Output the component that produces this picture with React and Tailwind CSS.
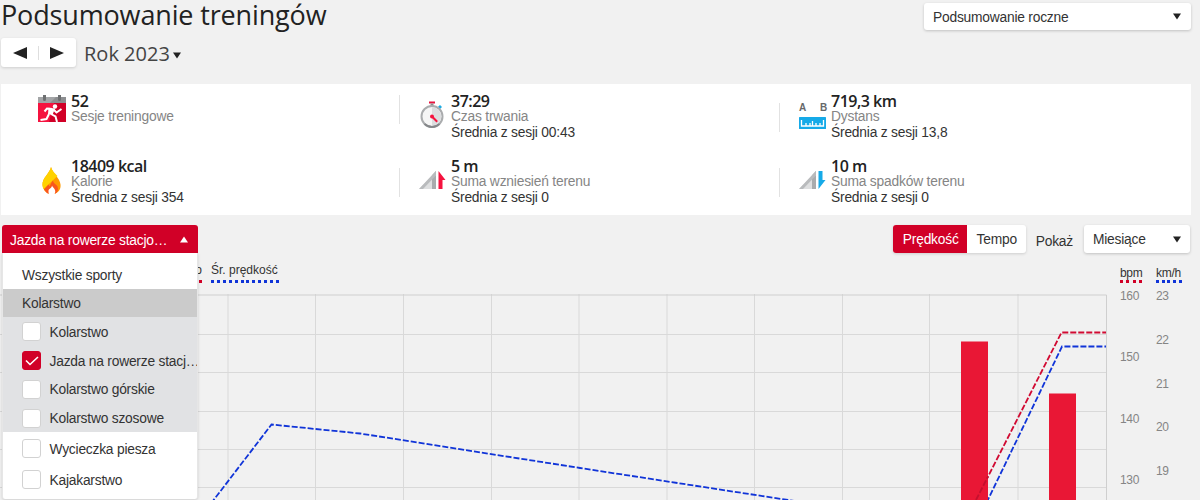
const STATS = [
  { icon: SessionIcon, value: "52", label: "Sesje treningowe" },
  { icon: StopwatchIcon, value: "37:29", label: "Czas trwania", avg: "Średnia z sesji 00:43", rule: "mt-[11px]" },
  { icon: DistanceIcon, value: "719,3 km", label: "Dystans", avg: "Średnia z sesji 13,8", rule: "mt-[19px]" },
  { icon: FlameIcon, value: "18409 kcal", label: "Kalorie", avg: "Średnia z sesji 354" },
  { icon: AscentIcon, value: "5 m", label: "Suma wzniesień terenu", avg: "Średnia z sesji 0", rule: "mt-[19px]" },
  { icon: DescentIcon, value: "10 m", label: "Suma spadków terenu", avg: "Średnia z sesji 0", rule: "mt-[19px]" },
];

const CYCLING = [
  { name: "Kolarstwo" },
  { name: "Jazda na rowerze stacj…", checked: true },
  { name: "Kolarstwo górskie" },
  { name: "Kolarstwo szosowe" },
];

const GRID_X = [228, 315.5, 403.5, 491.5, 579, 667, 754.5, 842.5, 929.5, 1018];
const GRID_Y = [40, 78, 117, 155, 193];

function SessionIcon() {
  return (
    <svg width="28" height="28" viewBox="0 0 28 28" className="mt-[11px] ml-[37px]">
      <rect y="2" width="28" height="7" fill="#a3a5a7" />
      <path d="M18 2h10v7H11z" fill="#8c8e90" />
      <rect y="8" width="28" height="19" fill="#f5133f" />
      <path d="M16 8h12v19H11z" fill="#d10027" />
      <path d="M5 0h3v4.500a1.500 1.500 0 0 1-3 0zM20 0h3v4.500a1.500 1.500 0 0 1-3 0z" fill="#6d6f71" />
      <circle cx="17" cy="11.500" r="2.200" fill="#fff" />
      <path
        d="M6.500 16.500l2.500-3 5 .5M15.500 14.500l3 3 5-3.500M11 19l-2.500 5-6 1M13 19l4.500 2.500 1.500 5.500"
        fill="none"
        stroke="#fff"
        strokeWidth="2"
      />
      <path d="M10.500 12.800l6.500.7-2.500 6.500-4.500-1z" fill="#fff" />
    </svg>
  );
}

function StopwatchIcon() {
  return (
    <svg width="24" height="28" viewBox="0 0 24 28" className="mt-[17px] ml-[20px]">
      <rect x="9" y="0.500" width="6" height="2" fill="#e8123d" />
      <rect x="10.500" y="2.500" width="3" height="2.500" fill="#8d8f91" />
      <path d="M18 5.700l2-1.700 2 2-2 2z" fill="#1cabe2" />
      <circle cx="12" cy="15.500" r="10.500" fill="#f5f5f5" stroke="#aaacae" strokeWidth="2" />
      <path d="M12 6.200a9.300 9.300 0 0 1 0 18.600z" fill="#dcdddf" />
      <path d="M4.600 22.900a10.500 10.500 0 0 0 14.800 0" fill="none" stroke="#85878a" strokeWidth="2" />
      <path d="M12 15.500l5.200 5.200" stroke="#f5133f" strokeWidth="2" />
      <circle cx="12" cy="15.500" r="2" fill="#f5133f" />
    </svg>
  );
}

function DistanceIcon() {
  return (
    <div className="mt-[18px] ml-[19px] w-7">
      <div className="flex justify-between text-[10px] leading-[12px] font-bold text-[#66686a]">
        <span>A</span>
        <span>B</span>
      </div>
      <svg width="27" height="12" viewBox="0 0 27 12" className="mt-[3px]">
        <rect width="27" height="12" rx="0.500" fill="#16aae8" />
        <path d="M2.500 3v6h22V3M7 9V6M11 9V6M13.500 9V4M17 9V6M21 9V6" fill="none" stroke="#fff" strokeWidth="1.300" />
      </svg>
    </div>
  );
}

function FlameIcon() {
  return (
    <svg width="19" height="27" viewBox="0 0 19 27" className="mt-[18px] ml-[41px]">
      <path d="M9 0C8 6 0 11 .500 18c.3 4 2.500 7 5.500 8.500h7.500C17 25 19 21.500 18.500 17.500 18 11 11 7 9 0z" fill="#ff9a00" />
      <path d="M9 0C8 6 0 11 .500 18c0 1.500.5 3 1 4L15.500 9C13 6 10 4 9 0z" fill="#ffd200" />
      <path d="M2 22.500C4 25 4.500 26 6 26.500h7.500c2.500-1.500 3-4.500 2-7-1-2.300-4-2.500-4.500-6C9 15.500 8.500 18 7.500 19.500L6.500 17.500z" fill="#f9561c" />
      <path d="M10 18.500c0 2.500-3 3-3.500 5-.2 1.200 0 2.500.5 3.500h5.500c1-1.500 1-3.500 0-5C11.500 20.500 10.500 20 10 18.500z" fill="#fff" />
    </svg>
  );
}

function Slope({ children }) {
  return (
    <svg width="28" height="20" viewBox="0 0 28 20" className="mt-[21px] ml-[18px]">
      <path d="M1 19L18 1v18z" fill="#dedfe0" />
      <path d="M14 5.300L18 1v18h-4z" fill="#a9abad" />
      <path d="M1 19L18 1v4.500L5 19z" fill="#b9bbbd" />
      {children}
    </svg>
  );
}

function AscentIcon() {
  return (
    <Slope>
      <path d="M20.500 1v18h4V10h3z" fill="#f5133f" />
    </Slope>
  );
}

function DescentIcon() {
  return (
    <Slope>
      <path d="M20.500 19V1h4v9h3z" fill="#16aae8" />
    </Slope>
  );
}

function Caret({ up = false, className = "" }) {
  return (
    <svg width="8" height="7" viewBox="0 0 8 7" className={className}>
      <path d={up ? "M0 6.500L4 .5l4 6z" : "M0 .5h8l-4 6z"} fill="currentColor" />
    </svg>
  );
}

function Stat({ item }) {
  const Icon = item.icon;
  return (
    <div className="flex h-[65px]">
      <div className="flex w-[70px] shrink-0 items-start">
        {item.rule && <span className={`ml-[18px] h-[29px] w-px bg-[#e2e2e2] ${item.rule}`} />}
        <Icon />
      </div>
      <div className="pt-[10px] text-[13.8px] leading-[15.5px] tracking-[-0.2px]">
        <p className="font-['Open_Sans',sans-serif] text-[16px] leading-[15px] font-semibold tracking-[-0.5px] text-[#222]">
          {item.value}
        </p>
        <p className="text-[#858585]">{item.label}</p>
        {item.avg && <p className="text-[#333]">{item.avg}</p>}
      </div>
    </div>
  );
}

function CheckRow({ name, checked, className }) {
  return (
    <div className={`flex items-center pl-[19px] ${className}`}>
      <span
        className={`flex h-[19px] w-[19px] shrink-0 items-center justify-center rounded-[3px] border ${
          checked ? "border-[#d10027] bg-[#d10027]" : "border-[#d2d2d2] bg-white"
        }`}
      >
        {checked && (
          <svg width="14" height="10" viewBox="0 0 14 10">
            <path d="M1 4.500L5 8.500 13 1" fill="none" stroke="#fff" strokeWidth="1.600" />
          </svg>
        )}
      </span>
      <span className="ml-[8.5px] pt-px whitespace-nowrap">{name}</span>
    </div>
  );
}

function SportMenu() {
  return (
    <div className="absolute top-[225px] left-[2px] w-[196px] leading-[21px]">
      <div className="flex h-[28px] items-center justify-between rounded-t-[3px] bg-[#d10027] pt-px pr-[10px] pl-[8px] text-white">
        <span className="pt-px">Jazda na rowerze stacjo…</span>
        <Caret up />
      </div>
      <div className="h-[246px] overflow-hidden rounded-b-[3px] border-x border-[#e6e6e6] bg-white shadow-[0_1px_3px_rgba(0,0,0,0.15)]">
        <div className="flex h-[36px] items-center pt-[8px] pl-[19px]">Wszystkie sporty</div>
        <div className="flex h-[28px] items-center bg-[#cbcbcb] pt-px pl-[19px]">Kolarstwo</div>
        <div className="bg-[#e1e2e4]">
          {CYCLING.map((sport) => (
            <CheckRow key={sport.name} {...sport} className="h-[28.75px] pt-px" />
          ))}
        </div>
        <CheckRow name="Wycieczka piesza" className="h-[33px]" />
        <CheckRow name="Kajakarstwo" className="h-[29px]" />
      </div>
    </div>
  );
}

function Axis({ unit, ticks, dots, className }) {
  return (
    <div className={`flex flex-col text-[12px] tracking-[-0.3px] ${className}`}>
      <span className="h-[14px] w-fit leading-[14px] text-[#333]">{unit}</span>
      <span className={`h-[3px] ${dots}`} />
      <div className="mt-[5px] text-[#858585]">{ticks}</div>
    </div>
  );
}

function Chart() {
  return (
    <svg width="1108" height="206" viewBox="0 0 1108 206" className="block">
      <g stroke="#d9d9d9" strokeWidth="1">
        {GRID_X.map((x) => (
          <line key={x} x1={x} x2={x} y1="0" y2="206" />
        ))}
        {GRID_Y.map((y) => (
          <line key={y} x1="0" x2="1106" y1={y + 0.5} y2={y + 0.5} />
        ))}
      </g>
      <path d="M0 1H1106.500V206" fill="none" stroke="#cfcfcf" />
      <g fill="none" strokeWidth="1.800" strokeDasharray="6 2">
        <path d="M206 216L271.500 130.500 360 139.500 580 174 788 206 960 232" stroke="#1034d8" />
        <path d="M971 216L1061.500 38.500H1106" stroke="#d10a32" />
        <path d="M983 216L1062 52.500H1106" stroke="#1034d8" />
      </g>
      <rect x="961" y="47.500" width="27" height="160" fill="#e91735" />
      <rect x="1049" y="99.500" width="27" height="110" fill="#e91735" />
      <path d="M976 206L988 182.500" stroke="#c4102e" strokeWidth="1.800" strokeDasharray="6 2" />
    </svg>
  );
}

export default function App() {
  return (
    <div className="relative h-[500px] w-[1200px] overflow-hidden bg-[#f1f1f1] font-['Liberation_Sans',Arial,sans-serif] text-[13.8px] tracking-[-0.22px] text-[#333]">
      <header className="flex h-[84px] items-start justify-between pr-[9px] pl-px">
        <div className="font-['Open_Sans',sans-serif] tracking-normal">
          <h1 className="h-[38px] text-[27px] leading-[30px] tracking-[-0.15px] text-[#222]">Podsumowanie treningów</h1>
          <div className="flex h-[29px] items-center">
            <div className="flex h-[29px] w-[75px] items-center justify-between rounded-[3px] bg-white px-[12px] text-[#222] shadow-[0_1px_3px_rgba(0,0,0,0.15)]">
              <svg width="14" height="12" viewBox="0 0 14 12">
                <path d="M14 0v12L0 6z" fill="currentColor" />
              </svg>
              <span className="h-[14px] w-px bg-[#dedede]" />
              <svg width="14" height="12" viewBox="0 0 14 12">
                <path d="M0 0v12l14-6z" fill="currentColor" />
              </svg>
            </div>
            <span className="mt-[2px] ml-[8px] text-[20px] leading-[27px] text-[#444]">Rok 2023</span>
            <Caret className="mt-[5px] ml-[3px] text-[#222]" />
          </div>
        </div>
        <div className="mt-[3px] flex h-[27px] w-[267px] items-center justify-between rounded-[3px] bg-white pr-[10px] pl-[9px] shadow-[0_1px_3px_rgba(0,0,0,0.2)]">
          <span className="pt-px leading-[21px]">Podsumowanie roczne</span>
          <Caret className="text-[#222]" />
        </div>
      </header>

      <section className="ml-px grid h-[131px] w-[1190px] grid-cols-[380px_380px_1fr] content-start bg-white">
        {STATS.map((item) => (
          <Stat key={item.label} item={item} />
        ))}
      </section>

      <div className="flex h-[47px] items-start justify-end pt-[10px] pr-[10px]">
        <div className="flex h-[28px] overflow-hidden rounded-[3px] bg-white leading-[29px] shadow-[0_1px_3px_rgba(0,0,0,0.15)]">
          <span className="w-[74px] bg-[#d10027] pl-[2px] text-center text-white">Prędkość</span>
          <span className="w-[59px] pl-px text-center">Tempo</span>
        </div>
        <span className="mt-[2px] ml-[10px] leading-[30px]">Pokaż</span>
        <div className="ml-[11px] flex h-[28px] w-[106px] items-center justify-between rounded-[3px] bg-white pr-[9px] pl-[9px] shadow-[0_1px_3px_rgba(0,0,0,0.2)]">
          <span className="pt-px leading-[21px]">Miesiące</span>
          <Caret className="text-[#222]" />
        </div>
      </div>

      <div className="flex">
        <div className="w-[1108px]">
          <div className="flex h-[32px] pl-[172px] text-[12px] leading-[16px] tracking-normal">
            <div className="w-[30px] text-right">
              tętno
              <div className="mt-[2px] h-[3px] bg-[repeating-linear-gradient(90deg,transparent_0_3px,#d10027_3px_6px)]" />
            </div>
            <div className="ml-[9px] w-[68px] whitespace-nowrap">
              Śr. prędkość
              <div className="mt-[2px] h-[3px] bg-[repeating-linear-gradient(90deg,#1034d8_0_3px,transparent_3px_5.900px)]" />
            </div>
          </div>
          <Chart />
        </div>
        <Axis
          unit="bpm"
          dots="w-[23px] bg-[repeating-linear-gradient(90deg,#d10027_0_3px,transparent_3px_6.500px)]"
          className="ml-[12px] w-[36px] pt-[4px]"
          ticks={[160, 150, 140, 130].map((t) => (
            <p key={t} className="h-[61.3px] leading-[16px]">{t}</p>
          ))}
        />
        <Axis
          unit="km/h"
          dots="w-[26px] bg-[repeating-linear-gradient(90deg,#1034d8_0_3px,transparent_3px_5.700px)]"
          className="pt-[4px]"
          ticks={[23, 22, 21, 20, 19].map((t) => (
            <p key={t} className="h-[43.8px] leading-[16px]">{t}</p>
          ))}
        />
      </div>

      <SportMenu />
    </div>
  );
}
